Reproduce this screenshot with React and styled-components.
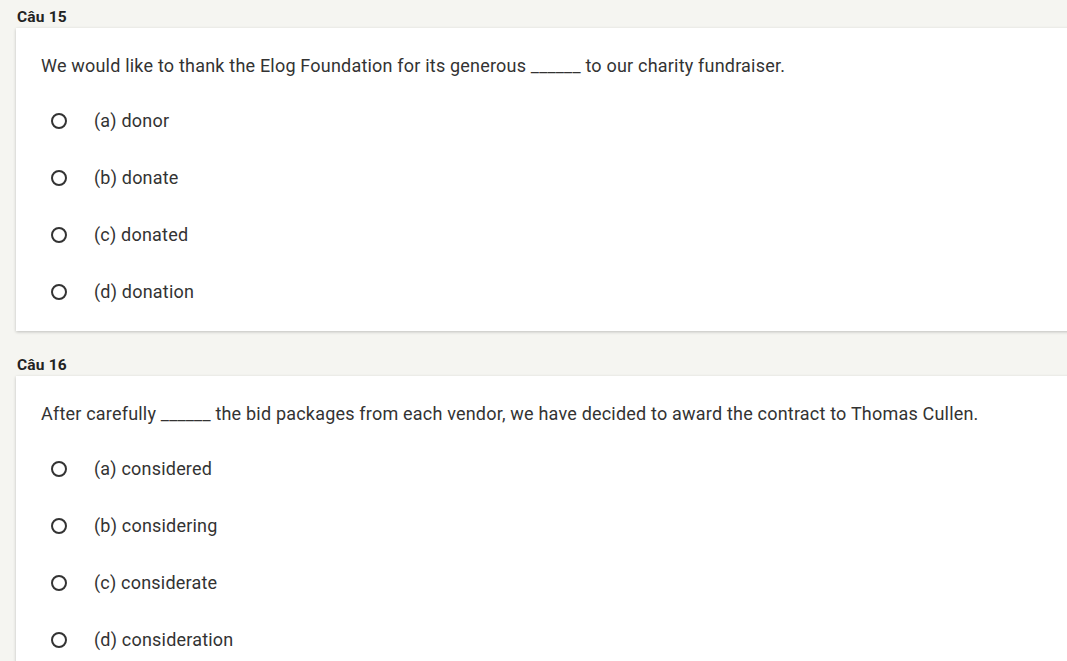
import React from "react";
import styled, { createGlobalStyle } from "styled-components";

const GlobalStyle = createGlobalStyle`
    html, body {
        margin: 0;
        padding: 0;
        background: #f5f5f1;
        overflow: hidden;
    }
    body {
        font-family: Roboto, "Liberation Sans", sans-serif;
        color: #333;
    }
`;

const Page = styled.div`
    padding: 6px 0 0 16px;
    width: 100%;
    box-sizing: border-box;
    overflow: hidden;
`;

const Block = styled.section`
    margin-bottom: 23px;
`;

const Label = styled.div`
    font-size: 15.5px;
    font-weight: bold;
    letter-spacing: 0.2px;
    color: #222;
    height: 22px;
    line-height: 22px;
    padding-left: 1px;
`;

const Card = styled.div`
    background: #fff;
    margin-right: -20px;
    padding: 25px 25px 11px;
    box-shadow: 0 1px 3px rgba(0, 0, 0, 0.22);
`;

const Question = styled.div`
    font-size: 18px;
    letter-spacing: 0.2px;
    line-height: 26px;
    margin-bottom: 13px;
`;

const Option = styled.label`
    display: flex;
    align-items: center;
    height: 57px;
    font-size: 18px;
    letter-spacing: 0.2px;
    cursor: pointer;
`;

const Radio = styled.span`
    width: 16px;
    height: 16px;
    box-sizing: border-box;
    border: 2px solid #333;
    border-radius: 50%;
    margin-left: 10px;
    margin-right: 27px;
    flex-shrink: 0;
`;

const questions = [
    {
        label: "Câu 15",
        text: "We would like to thank the Elog Foundation for its generous ______ to our charity fundraiser.",
        options: ["(a) donor", "(b) donate", "(c) donated", "(d) donation"],
    },
    {
        label: "Câu 16",
        text: "After carefully ______ the bid packages from each vendor, we have decided to award the contract to Thomas Cullen.",
        options: ["(a) considered", "(b) considering", "(c) considerate", "(d) consideration"],
    },
];

const App = () => (
    <>
        <GlobalStyle />
        <Page>
            {questions.map((q) => (
                <Block key={q.label}>
                    <Label>{q.label}</Label>
                    <Card>
                        <Question>{q.text}</Question>
                        {q.options.map((o) => (
                            <Option key={o}>
                                <Radio />
                                <span>{o}</span>
                            </Option>
                        ))}
                    </Card>
                </Block>
            ))}
        </Page>
    </>
);

export default App;
